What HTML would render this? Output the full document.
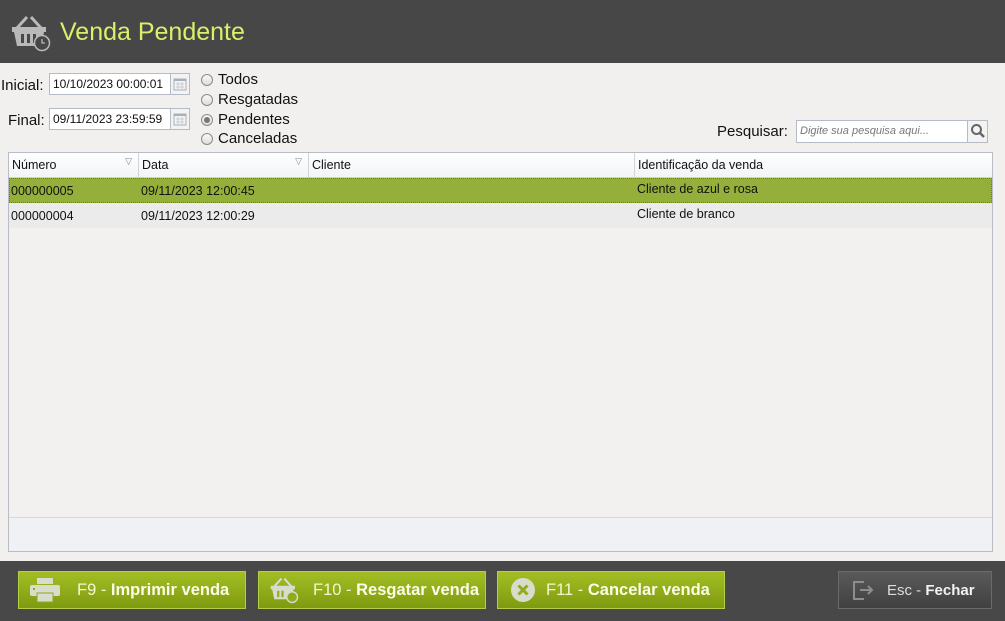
<!DOCTYPE html>
<html><head><meta charset="utf-8"><style>
*{margin:0;padding:0;box-sizing:border-box}
body{width:1005px;height:621px;background:#f1f0ee;font-family:"Liberation Sans",sans-serif;position:relative;overflow:hidden;color:#111}
.abs{position:absolute}
.hdr{left:0;top:0;width:1005px;height:63px;background:#474747}
.title{left:60px;top:18px;font-size:25px;color:#d8f06a}
.lbl{font-size:15px}
.inp{background:#fff;border:1px solid #b5bcc6;height:22px;font-size:12px;padding:3px 0 0 3px}
.cal{background:#f3f3f3;border:1px solid #b5bcc6;width:20px;height:22px}
.radio{width:12px;height:12px;border-radius:50%;border:1px solid #8a8a8a;background:linear-gradient(#f8f8f8,#ddd)}
.grid{left:8px;top:152px;width:985px;height:400px;border:1px solid #b8bcc4;background:#f2f1ef}
.th{top:0;height:25px;background:linear-gradient(#fff,#f2f4f6);border-bottom:1px solid #d0d4da;font-size:12.5px;padding:5px 3px}
.cell{font-size:12.5px}
.bar{left:0;top:561px;width:1005px;height:60px;background:#484848}
.btn{top:571px;height:38px;border:1px solid #b5d040;background:linear-gradient(#a3be24,#7e9b10);color:#f2f7d0;font-size:16.5px;display:flex;align-items:center}
.btn b{color:#fbfde6}
</style></head><body>
<div class="abs hdr"></div>
<svg class="abs" style="left:11px;top:14px" width="42" height="38" viewBox="0 0 42 38">
<path d="M6 14 L16 3 M30 14 L20 3" stroke="#b9b9b9" stroke-width="3" fill="none"/>
<path d="M1 13 H35 V18 H33 L30 32 H6 L3 18 H1Z" fill="#b9b9b9"/>
<rect x="10" y="20" width="3" height="9" fill="#474747"/><rect x="16" y="20" width="3" height="9" fill="#474747"/><rect x="22" y="20" width="3" height="9" fill="#474747"/>
<circle cx="31" cy="29" r="7.5" fill="#474747" stroke="#b9b9b9" stroke-width="1.5"/>
<path d="M31 25 V29 H34" stroke="#b9b9b9" stroke-width="1.3" fill="none"/>
</svg>
<div class="abs title">Venda Pendente</div>

<div class="abs lbl" style="left:1px;top:77px">Inicial:</div>
<div class="abs inp" style="left:49px;top:73px;width:122px">10/10/2023 00:00:01</div>
<div class="abs cal" style="left:170px;top:73px"><svg width="18" height="20"><rect x="3" y="5" width="12" height="11" fill="none" stroke="#a8b0b8"/><rect x="3" y="5" width="12" height="2" fill="#a8b0b8"/><path d="M5 10h8M5 13h8M7 8v8M11 8v8" stroke="#c8ced4"/></svg></div>
<div class="abs lbl" style="left:8px;top:112px">Final:</div>
<div class="abs inp" style="left:49px;top:108px;width:122px">09/11/2023 23:59:59</div>
<div class="abs cal" style="left:170px;top:108px"><svg width="18" height="20"><rect x="3" y="5" width="12" height="11" fill="none" stroke="#a8b0b8"/><rect x="3" y="5" width="12" height="2" fill="#a8b0b8"/><path d="M5 10h8M5 13h8M7 8v8M11 8v8" stroke="#c8ced4"/></svg></div>

<div class="abs radio" style="left:201px;top:74px"></div><div class="abs lbl" style="left:218px;top:71px">Todos</div>
<div class="abs radio" style="left:201px;top:94px"></div><div class="abs lbl" style="left:218px;top:91px">Resgatadas</div>
<div class="abs radio" style="left:201px;top:114px"><div style="width:6px;height:6px;border-radius:50%;background:#777;margin:2px"></div></div><div class="abs lbl" style="left:218px;top:111px">Pendentes</div>
<div class="abs radio" style="left:201px;top:133px"></div><div class="abs lbl" style="left:218px;top:130px">Canceladas</div>

<div class="abs lbl" style="left:717px;top:123px">Pesquisar:</div>
<div class="abs inp" style="left:796px;top:120px;width:172px;height:23px;font-style:italic;color:#777;font-size:11px;padding-top:4px">Digite sua pesquisa aqui...</div>
<div class="abs" style="left:967px;top:120px;width:21px;height:23px;border:1px solid #b5bcc6;background:#f3f3f3"></div>
<svg class="abs" style="left:970px;top:123px" width="16" height="16"><circle cx="6.5" cy="6.5" r="4.5" stroke="#666" stroke-width="2" fill="none"/><path d="M10 10 L14 14" stroke="#666" stroke-width="2.5"/></svg>

<div class="abs grid">
<div class="abs th" style="left:0;width:130px;border-right:1px solid #d0d4da">Número<span style="position:absolute;right:6px;top:3px;font-size:9px;color:#7a8aa0">▽</span></div>
<div class="abs th" style="left:130px;width:170px;border-right:1px solid #d0d4da">Data<span style="position:absolute;right:6px;top:3px;font-size:9px;color:#7a8aa0">▽</span></div>
<div class="abs th" style="left:300px;width:326px;border-right:1px solid #d0d4da">Cliente</div>
<div class="abs th" style="left:626px;width:357px">Identificação da venda</div>
<div class="abs" style="left:0;top:25px;width:983px;height:25px;background:#94b03a;border:1px dotted #6d5fd0"></div>
<div class="abs" style="left:0;top:50px;width:983px;height:25px;background:#ebebeb"></div>
<div class="abs cell" style="left:2px;top:31px">000000005</div><div class="abs cell" style="left:132px;top:31px">09/11/2023 12:00:45</div><div class="abs cell" style="left:628px;top:29px">Cliente de azul e rosa</div>
<div class="abs cell" style="left:2px;top:56px">000000004</div><div class="abs cell" style="left:132px;top:56px">09/11/2023 12:00:29</div><div class="abs cell" style="left:628px;top:54px">Cliente de branco</div>
<div class="abs" style="left:0;top:364px;width:983px;height:34px;background:#eff1f4;border-top:1px solid #d6d8dc"></div>
</div>

<div class="abs bar"></div>
<div class="abs btn" style="left:18px;width:228px">
<svg style="margin-left:10px" width="32" height="26" viewBox="0 0 32 26"><rect x="8" y="1" width="16" height="6" fill="#d8dccb"/><rect x="1" y="8" width="30" height="11" rx="2" fill="#d8dccb"/><rect x="8" y="16" width="16" height="9" fill="#d8dccb" stroke="#8fa62a"/><rect x="4" y="11" width="2" height="2" fill="#8fa62a"/></svg>
<span style="margin-left:16px">F9 - <b>Imprimir venda</b></span></div>
<div class="abs btn" style="left:258px;width:228px">
<svg style="margin-left:11px" width="30" height="28" viewBox="0 0 42 38"><path d="M6 14 L16 3 M30 14 L20 3" stroke="#d8dccb" stroke-width="3" fill="none"/><path d="M1 13 H35 V18 H33 L30 32 H6 L3 18 H1Z" fill="#d8dccb"/><rect x="10" y="20" width="3" height="9" fill="#90ab1c"/><rect x="16" y="20" width="3" height="9" fill="#90ab1c"/><circle cx="31" cy="29" r="7.5" fill="#90ab1c" stroke="#d8dccb" stroke-width="2"/></svg>
<span style="margin-left:13px">F10 - <b>Resgatar venda</b></span></div>
<div class="abs btn" style="left:497px;width:228px">
<svg style="margin-left:12px" width="26" height="26"><circle cx="13" cy="13" r="12" fill="#d8dccb"/><path d="M8.5 8.5 L17.5 17.5 M17.5 8.5 L8.5 17.5" stroke="#90ab1c" stroke-width="3"/></svg>
<span style="margin-left:10px">F11 - <b>Cancelar venda</b></span></div>
<div class="abs" style="left:838px;top:571px;width:154px;height:38px;border:1px solid #6a6a6a;background:linear-gradient(#5a5a5a,#404040);color:#ddd;font-size:15px;display:flex;align-items:center">
<svg style="margin-left:12px" width="24" height="24"><path d="M13 4 H3 V21 H13" stroke="#8a8e90" stroke-width="2" fill="none"/><path d="M9 12 H21 M17 8 L21 12 L17 16" stroke="#8a8e90" stroke-width="2" fill="none"/></svg>
<span style="margin-left:12px">Esc - <b style="color:#f2f2f2">Fechar</b></span></div>
</body></html>
